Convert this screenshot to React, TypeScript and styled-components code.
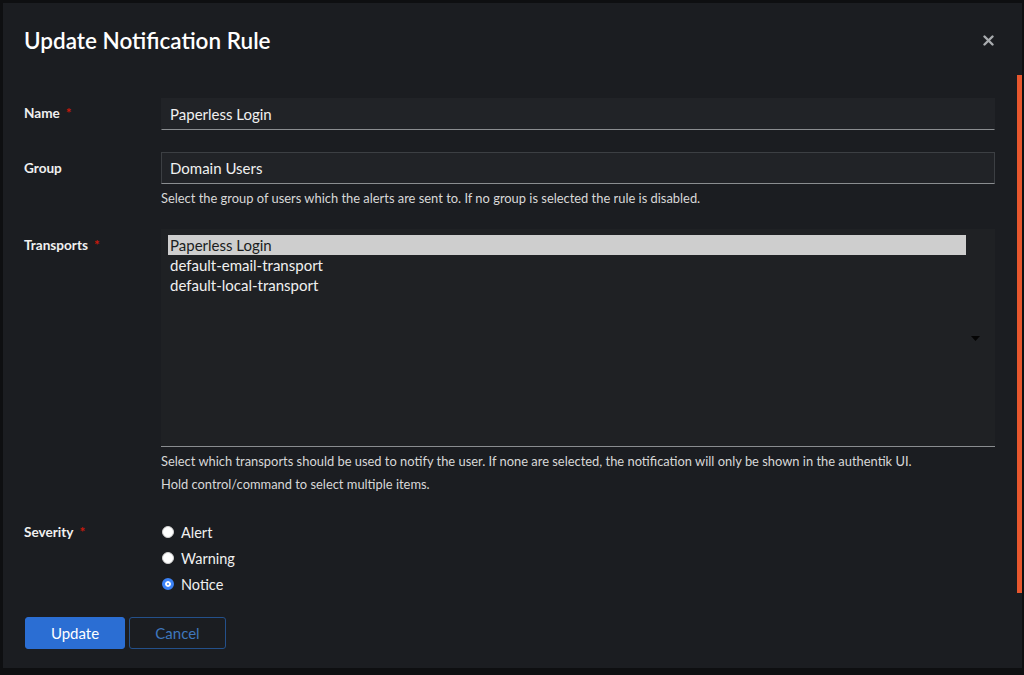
import React from "react";
import styled, { createGlobalStyle } from "styled-components";

const FONT = `Lato, "Noto Sans", sans-serif`;

const Global = createGlobalStyle`
  html, body { margin: 0; padding: 0; background: #0e0f11; }
  body { font-family: ${FONT}; color: #f0f0f0; }
  * { box-sizing: border-box; }
`;

const Backdrop = styled.div`
  width: 1024px;
  height: 675px;
  display: flex;
  padding: 3px 2px 7px 3px;
  background: #0e0f11;
`;

const Modal = styled.div`
  flex: 1;
  display: flex;
  flex-direction: column;
  background: #1b1d21;
  min-width: 0;
`;

const Header = styled.div`
  height: 72px;
  flex: none;
  display: flex;
  align-items: center;
  justify-content: space-between;
  padding: 3px 27px 0 21px;
`;

const Title = styled.h1`
  margin: 0;
  font-size: 22.5px;
  line-height: 30px;
  font-weight: 600;
  color: #ffffff;
`;

const CloseButton = styled.button`
  background: none;
  border: 0;
  padding: 0;
  width: 14px;
  height: 14px;
  display: flex;
  align-items: center;
  justify-content: center;
  cursor: pointer;
`;

const BodyRow = styled.div`
  flex: 1;
  min-height: 0;
  display: flex;
`;

const Body = styled.div`
  flex: 1;
  min-width: 0;
  overflow: hidden;
  padding: 23px 22px 11px 21px;
`;

const ScrollTrack = styled.div`
  flex: none;
  width: 5px;
  display: flex;
  flex-direction: column;
`;

const ScrollThumb = styled.div`
  height: 518px;
  background: #e8572e;
`;

const Form = styled.form`
  display: flex;
  flex-direction: column;
  gap: 22px;
`;

const Group = styled.div<{ $gapTop?: number }>`
  display: grid;
  grid-template-columns: 137px 1fr;
  margin-top: ${(p) => p.$gapTop ?? 0}px;
`;

const Label = styled.div<{ $top?: number }>`
  padding-top: ${(p) => p.$top ?? 6}px;
  font-size: 13.6px;
  line-height: 20px;
  font-weight: 700;
  color: #f0f0f0;
`;

const Required = styled.span`
  color: #c9190b;
  margin-left: 6px;
  font-weight: 700;
`;

const Control = styled.div`
  display: flex;
  flex-direction: column;
  min-width: 0;
`;

const TextInput = styled.div<{ $boxed?: boolean }>`
  height: 32px;
  display: flex;
  align-items: center;
  padding: 0 8px;
  font-size: 15px;
  color: #f0f0f0;
  background: #212327;
  border: 1px solid ${(p) => (p.$boxed ? "#3c3f43" : "transparent")};
  border-bottom-color: #8a8d90;
`;

const Helper = styled.p`
  margin: 5px 0 0;
  font-size: 12.9px;
  line-height: 18px;
  color: #d8d8d8;
`;

const MultiSelect = styled.div`
  height: 218px;
  display: flex;
  background: #1f2124;
  border-bottom: 1px solid #8a8d90;
  padding: 6px 0 0 7px;
`;

const OptionList = styled.div`
  flex: 1;
  display: flex;
  flex-direction: column;
`;

const Option = styled.div<{ $selected?: boolean }>`
  height: 20px;
  line-height: 20px;
  padding-left: 2px;
  font-size: 15px;
  color: ${(p) => (p.$selected ? "#1b1d21" : "#f0f0f0")};
  background: ${(p) => (p.$selected ? "#cecece" : "transparent")};
`;

const CaretCol = styled.div`
  width: 29px;
  display: flex;
  align-items: center;
  justify-content: center;
  padding: 0 10px 4px 0;
`;

const RadioList = styled.div`
  display: flex;
  flex-direction: column;
  padding-top: 3px;
`;

const RadioRow = styled.label`
  height: 26px;
  display: flex;
  align-items: center;
  gap: 7px;
  padding-left: 1px;
  font-size: 14.5px;
  color: #f0f0f0;
`;

const RadioDot = styled.span<{ $checked?: boolean }>`
  width: 12px;
  height: 12px;
  border-radius: 50%;
  border: ${(p) => (p.$checked ? "3px solid #3b82f6" : "1px solid #d0d0d0")};
  box-shadow: ${(p) => (p.$checked ? "inset 0 0 0 2px #ffffff" : "none")};
  background: ${(p) => (p.$checked ? "#3b82f6" : "#ffffff")};
`;

const Footer = styled.div`
  flex: none;
  display: flex;
  gap: 4px;
  padding: 17px 21px 19px 22px;
`;

const Button = styled.button<{ $primary?: boolean }>`
  height: 32px;
  width: ${(p) => (p.$primary ? 100 : 97)}px;
  font-family: ${FONT};
  font-size: 15px;
  border-radius: 3px;
  cursor: pointer;
  background: ${(p) => (p.$primary ? "#2b6ed3" : "transparent")};
  color: ${(p) => (p.$primary ? "#ffffff" : "#3f77bd")};
  border: 1px solid ${(p) => (p.$primary ? "#2b6ed3" : "#24508a")};
`;

const severities = [
  { label: "Alert", checked: false },
  { label: "Warning", checked: false },
  { label: "Notice", checked: true },
];

const transports = [
  { label: "Paperless Login", selected: true },
  { label: "default-email-transport", selected: false },
  { label: "default-local-transport", selected: false },
];

export default function App() {
  return (
    <>
      <Global />
      <Backdrop>
        <Modal role="dialog" aria-label="Update Notification Rule">
          <Header>
            <Title>Update Notification Rule</Title>
            <CloseButton aria-label="Close">
              <svg width="11" height="11" viewBox="0 0 11 11">
                <path d="M1.5 1.5 L9.5 9.5 M9.5 1.5 L1.5 9.5" stroke="#a9acaf" strokeWidth="2.4" strokeLinecap="round" />
              </svg>
            </CloseButton>
          </Header>
          <BodyRow>
            <Body>
              <Form>
                <Group>
                  <Label $top={5}>
                    Name<Required>*</Required>
                  </Label>
                  <Control>
                    <TextInput>Paperless Login</TextInput>
                  </Control>
                </Group>
                <Group>
                  <Label>Group</Label>
                  <Control>
                    <TextInput $boxed>Domain Users</TextInput>
                    <Helper>
                      Select the group of users which the alerts are sent to. If no group is selected the rule is disabled.
                    </Helper>
                  </Control>
                </Group>
                <Group>
                  <Label>
                    Transports<Required>*</Required>
                  </Label>
                  <Control>
                    <MultiSelect>
                      <OptionList>
                        {transports.map((t) => (
                          <Option key={t.label} $selected={t.selected}>
                            {t.label}
                          </Option>
                        ))}
                      </OptionList>
                      <CaretCol>
                        <svg width="9" height="5" viewBox="0 0 9 5">
                          <path d="M0 0 H9 L4.5 5 Z" fill="#050505" />
                        </svg>
                      </CaretCol>
                    </MultiSelect>
                    <Helper>
                      Select which transports should be used to notify the user. If none are selected, the notification will only be shown in the authentik UI.
                    </Helper>
                    <Helper>Hold control/command to select multiple items.</Helper>
                  </Control>
                </Group>
                <Group $gapTop={1}>
                  <Label>
                    Severity<Required>*</Required>
                  </Label>
                  <RadioList>
                    {severities.map((s) => (
                      <RadioRow key={s.label}>
                        <RadioDot $checked={s.checked} />
                        {s.label}
                      </RadioRow>
                    ))}
                  </RadioList>
                </Group>
              </Form>
            </Body>
            <ScrollTrack>
              <ScrollThumb />
            </ScrollTrack>
          </BodyRow>
          <Footer>
            <Button $primary>Update</Button>
            <Button>Cancel</Button>
          </Footer>
        </Modal>
      </Backdrop>
    </>
  );
}
